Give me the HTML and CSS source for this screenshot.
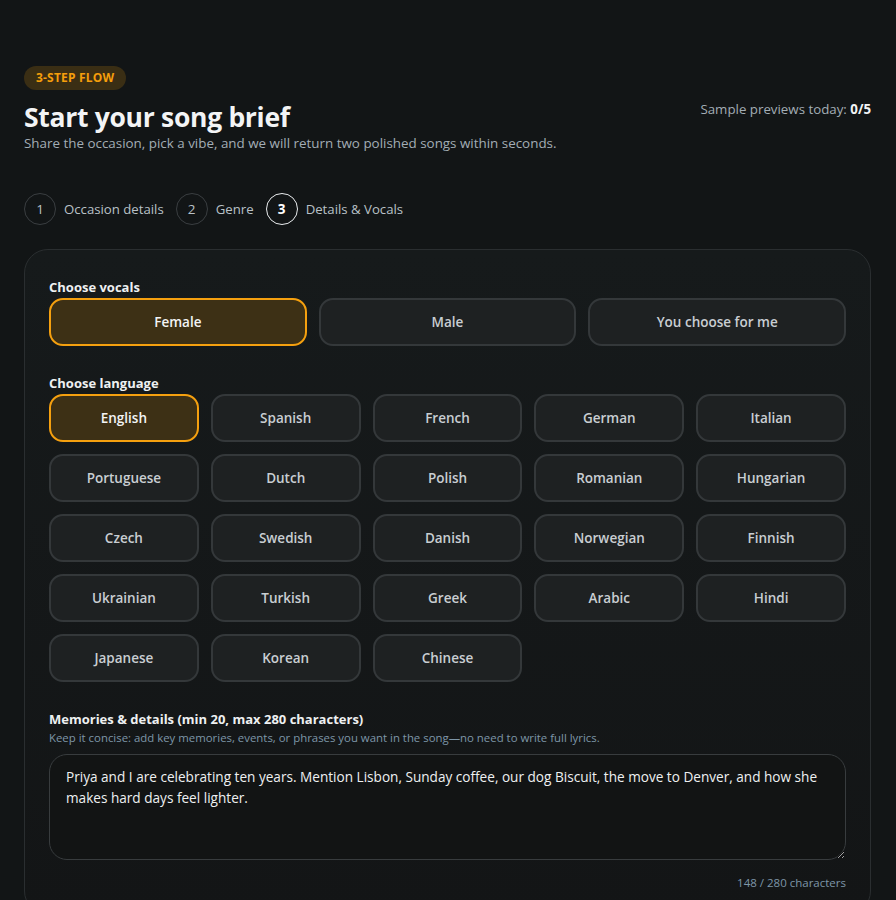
FILE: index.html
```html
<!DOCTYPE html>
<html>
<head>
<meta charset="utf-8">
<link rel="stylesheet" href="styles.css">
</head>
<body>
<div class="page">
  <header class="head">
    <div class="head-left">
      <span class="badge">3-STEP FLOW</span>
      <h1 class="title">Start your song brief</h1>
      <p class="sub">Share the occasion, pick a vibe, and we will return two polished songs within seconds.</p>
    </div>
    <div class="quota">Sample previews today: <b>0/5</b></div>
  </header>

  <nav class="steps">
    <div class="step"><span class="num">1</span><span class="lbl">Occasion details</span></div>
    <div class="step"><span class="num">2</span><span class="lbl">Genre</span></div>
    <div class="step active"><span class="num">3</span><span class="lbl">Details &amp; Vocals</span></div>
  </nav>

  <section class="card">
    <div class="field">
      <div class="label">Choose vocals</div>
      <div class="grid3">
        <button class="opt sel">Female</button>
        <button class="opt">Male</button>
        <button class="opt">You choose for me</button>
      </div>
    </div>

    <div class="field">
      <div class="label">Choose language</div>
      <div class="grid5">
        <button class="opt sel">English</button>
        <button class="opt">Spanish</button>
        <button class="opt">French</button>
        <button class="opt">German</button>
        <button class="opt">Italian</button>
        <button class="opt">Portuguese</button>
        <button class="opt">Dutch</button>
        <button class="opt">Polish</button>
        <button class="opt">Romanian</button>
        <button class="opt">Hungarian</button>
        <button class="opt">Czech</button>
        <button class="opt">Swedish</button>
        <button class="opt">Danish</button>
        <button class="opt">Norwegian</button>
        <button class="opt">Finnish</button>
        <button class="opt">Ukrainian</button>
        <button class="opt">Turkish</button>
        <button class="opt">Greek</button>
        <button class="opt">Arabic</button>
        <button class="opt">Hindi</button>
        <button class="opt">Japanese</button>
        <button class="opt">Korean</button>
        <button class="opt">Chinese</button>
      </div>
    </div>

    <div class="field mem">
      <div class="label">Memories &amp; details (min 20, max 280 characters)</div>
      <div class="hint">Keep it concise: add key memories, events, or phrases you want in the song—no need to write full lyrics.</div>
      <textarea class="ta">Priya and I are celebrating ten years. Mention Lisbon, Sunday coffee, our dog Biscuit, the move to Denver, and how she makes hard days feel lighter.</textarea>
      <div class="count">148 / 280 characters</div>
    </div>
  </section>
</div>
</body>
</html>
```

FILE: styles.css
```css
* { box-sizing: border-box; }
html, body { margin: 0; padding: 0; }
body {
  background: #121516;
  color: #e8eaeb;
  font-family: "Open Sans", "Noto Sans", sans-serif;
}
.page {
  padding: 65px 25px 0 24px;
}
.head {
  display: flex;
  justify-content: space-between;
  align-items: flex-start;
}
.badge {
  display: inline-block;
  height: 24px;
  line-height: 24px;
  padding: 0 12px;
  border-radius: 12px;
  background: #3a2e14;
  color: #f59e0b;
  font-size: 12px;
  font-weight: 700;
  letter-spacing: 0.2px;
}
.title {
  margin: 9px 0 0;
  font-size: 26.5px;
  line-height: 36px;
  font-weight: 700;
  color: #f3f4f5;
  letter-spacing: -0.3px;
}
.sub {
  margin: 0;
  font-size: 13.4px;
  line-height: 16px;
  color: #a3adb5;
}
.quota {
  margin-top: 35px;
  font-size: 13.3px;
  color: #a3adb5;
}
.quota b { color: #f3f4f5; }

.steps {
  display: flex;
  gap: 12px;
  margin-top: 42px;
  align-items: center;
}
.step {
  display: flex;
  align-items: center;
  gap: 8px;
}
.num {
  width: 32px;
  height: 32px;
  border-radius: 50%;
  border: 1px solid #3a3e41;
  display: flex;
  align-items: center;
  justify-content: center;
  font-size: 13.5px;
  color: #b9c1c7;
}
.lbl {
  font-size: 13.2px;
  color: #b9c1c7;
}
.step.active .num {
  border-color: #e9ecee;
  color: #fff;
  font-weight: 700;
}

.card {
  margin-top: 24px;
  border: 1px solid #2a2e30;
  border-radius: 24px;
  background: linear-gradient(180deg, #161a1b 0%, #131516 100%);
  padding: 29px 24px 24px 24px;
}
.field + .field { margin-top: 29px; }
.label {
  font-size: 13px;
  font-weight: 700;
  color: #eef0f1;
  line-height: 16px;
  margin-bottom: 3px;
}
.grid3 {
  display: grid;
  grid-template-columns: repeat(3, 1fr);
  gap: 12px;
}
.grid5 {
  display: grid;
  grid-template-columns: repeat(5, 1fr);
  gap: 12px;
}
.opt {
  height: 48px;
  border-radius: 14px;
  border: 2px solid #34383a;
  background: #1e2122;
  color: #c9ced2;
  font-family: inherit;
  font-size: 13.5px;
  font-weight: 600;
  padding: 0;
}
.opt.sel {
  background: #3d3015;
  border-color: #f5a00f;
  color: #f3f4f5;
}
.field.mem { margin-top: 29px; }
.mem .label { margin-bottom: 3px; }
.hint {
  font-size: 11.4px;
  color: #7e96a8;
  line-height: 16px;
}
.ta {
  display: block;
  width: 100%;
  height: 106px;
  margin-top: 8px;
  border: 1px solid #383c3e;
  border-radius: 18px;
  background: #121414;
  color: #eef0f1;
  font-family: inherit;
  font-size: 13.6px;
  line-height: 21px;
  padding: 11px 16px;
  resize: vertical;
}
.count {
  text-align: right;
  font-size: 11.5px;
  color: #7e96a8;
  margin-top: 15px;
}
```
